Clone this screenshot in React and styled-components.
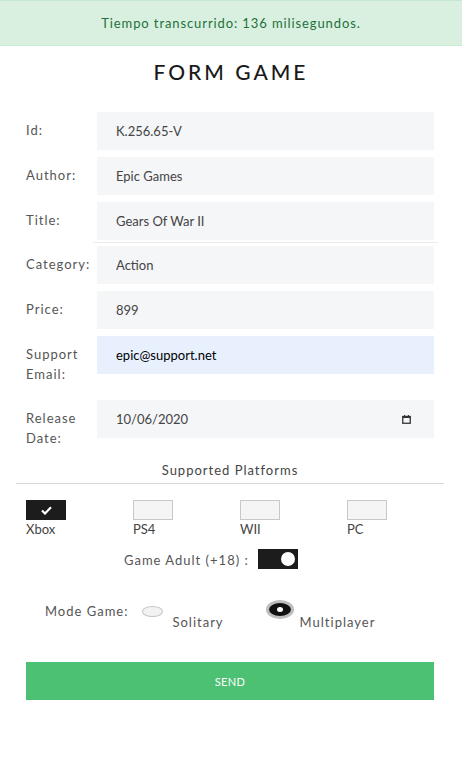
import React from "react";
import styled, { createGlobalStyle } from "styled-components";

const Global = createGlobalStyle`
  html, body { margin: 0; padding: 0; background: #fff; }
  body { font-family: Lato, "Noto Sans", sans-serif; color: #333; }
  * { box-sizing: border-box; }
`;

const Page = styled.div`
  width: 462px;
  min-height: 768px;
  background: #fff;
`;

const Alert = styled.div`
  height: 46px;
  background: #d9f0e0;
  border-top: 1px solid #c6e8d0;
  border-bottom: 1px solid #c6e8d0;
  color: #22703a;
  font-size: 13px;
  letter-spacing: 0.9px;
  display: flex;
  align-items: center;
  justify-content: center;
`;

const Title = styled.h1`
  margin: 14px 0 0;
  height: 24px;
  font-size: 21px;
  font-weight: 500;
  letter-spacing: 3px;
  text-align: center;
  line-height: 24px;
  color: #1a1a1a;
`;

const Fields = styled.div`
  display: flex;
  flex-direction: column;
  gap: 7px;
  padding: 0 28px 0 26px;
  margin-top: 28px;
`;

const Row = styled.div`
  display: flex;
  align-items: flex-start;
`;

const Label = styled.label`
  width: 71px;
  flex: none;
  padding: 8px 0 9px;
  line-height: 20px;
  font-size: 13px;
  letter-spacing: 1px;
  color: #555;
`;

const Input = styled.input`
  flex: 1;
  height: 38px;
  border: none;
  outline: none;
  padding: 0 0 0 19px;
  margin: 0;
  background: ${(p) => (p.$filled ? "#e8f0fe" : "#f5f6f8")};
  color: ${(p) => (p.$filled ? "#000" : "#444")};
  font-family: Lato, "Noto Sans", sans-serif;
  font-size: 13px;
  min-width: 0;
`;

const DateBox = styled.div`
  flex: 1;
  height: 38px;
  background: #f5f6f8;
  display: flex;
  align-items: center;
  justify-content: space-between;
  padding: 0 23px 0 19px;
  font-size: 13px;
  color: #444;
`;

const Divider = styled.div`
  height: 1px;
  background: #ececec;
  margin: -5px -4px -4px 67px;
`;

const SectionTitle = styled.div`
  margin: 5px 18px 0 16px;
  padding-bottom: 5px;
  border-bottom: 1px solid #d8d8d8;
  text-align: center;
  font-size: 13px;
  letter-spacing: 1px;
  color: #444;
`;

const Platforms = styled.div`
  display: grid;
  grid-template-columns: repeat(4, 107px);
  padding: 16px 0 0 26px;
`;

const Platform = styled.div`
  display: flex;
  flex-direction: column;
  align-items: flex-start;
`;

const Check = styled.span`
  width: 40px;
  height: 20px;
  display: flex;
  align-items: center;
  justify-content: center;
  background: ${(p) => (p.$on ? "#1c1c1c" : "#f5f5f5")};
  border: 1px solid ${(p) => (p.$on ? "#1c1c1c" : "#c8c8c8")};
`;

const PlatformName = styled.span`
  font-size: 13px;
  line-height: 18px;
  color: #444;
`;

const AdultRow = styled.div`
  display: flex;
  align-items: flex-end;
  padding: 11px 0 0 124px;
  gap: 9px;
`;

const Text = styled.span`
  font-size: 13px;
  letter-spacing: 1px;
  color: #555;
  line-height: 18px;
`;

const Toggle = styled.span`
  width: 40px;
  height: 20px;
  background: #1c1c1c;
  display: flex;
  align-items: center;
  justify-content: flex-end;
  padding-right: 3px;
`;

const Knob = styled.span`
  width: 14px;
  height: 14px;
  border-radius: 50%;
  background: #fff;
`;

const ModeRow = styled.div`
  display: flex;
  align-items: flex-start;
  padding: 34px 0 0 45px;
`;

const ModeLabel = styled(Text)`
  margin-top: -1px;
  margin-right: 14px;
`;

const RadioGroup = styled.div`
  display: flex;
  align-items: flex-start;
  margin-right: ${(p) => p.$gap || 0}px;
`;

const Radio = styled.span`
  display: flex;
  align-items: center;
  justify-content: center;
  flex: none;
  border-radius: 50%;
  ${(p) =>
    p.$on
      ? `width: 28px; height: 19px; margin-top: -3px; background: #111; border: 3px solid #bdbdbd;`
      : `width: 21px; height: 11px; margin-top: 3px; background: #f2f2f2; border: 1px solid #c4c4c4;`}
`;

const Dot = styled.span`
  width: 6px;
  height: 5px;
  border-radius: 50%;
  background: #fff;
`;

const RadioText = styled(Text)`
  margin: 10px 0 0 ${(p) => p.$indent}px;
`;

const Send = styled.button`
  display: block;
  margin: 31px 28px 0 26px;
  width: 408px;
  height: 38px;
  border: none;
  background: #4cc174;
  color: #fff;
  font-family: Lato, "Noto Sans", sans-serif;
  font-size: 11px;
  letter-spacing: 0.3px;
`;

const CalendarIcon = () => (
  <svg width="9" height="9" viewBox="0 0 9 9">
    <rect x="0.75" y="1.5" width="7.5" height="6.75" fill="none" stroke="#333" strokeWidth="1.3" />
    <rect x="0.5" y="1" width="8" height="2" fill="#333" />
    <rect x="2" y="0" width="1.2" height="1.5" fill="#333" />
    <rect x="5.8" y="0" width="1.2" height="1.5" fill="#333" />
  </svg>
);

const CheckMark = () => (
  <svg width="11" height="9" viewBox="0 0 11 9">
    <path d="M1 4.5 L4 7.5 L10 1.2" fill="none" stroke="#fff" strokeWidth="2.2" />
  </svg>
);

const fields = [
  ["Id:", "K.256.65-V"],
  ["Author:", "Epic Games"],
  ["Title:", "Gears Of War II"],
];
const fields2 = [
  ["Category:", "Action"],
  ["Price:", "899"],
];

export default function App() {
  return (
    <Page>
      <Global />
      <Alert>Tiempo transcurrido: 136 milisegundos.</Alert>
      <Title>FORM GAME</Title>
      <Fields>
        {fields.map(([l, v]) => (
          <Row key={l}>
            <Label>{l}</Label>
            <Input readOnly value={v} />
          </Row>
        ))}
        <Divider />
        {fields2.map(([l, v]) => (
          <Row key={l}>
            <Label>{l}</Label>
            <Input readOnly value={v} />
          </Row>
        ))}
        <Row>
          <Label>Support Email:</Label>
          <Input readOnly $filled value="epic@support.net" />
        </Row>
        <Row>
          <Label>Release Date:</Label>
          <DateBox>
            <span>10/06/2020</span>
            <CalendarIcon />
          </DateBox>
        </Row>
      </Fields>
      <SectionTitle>Supported Platforms</SectionTitle>
      <Platforms>
        {[
          ["Xbox", true],
          ["PS4", false],
          ["WII", false],
          ["PC", false],
        ].map(([n, on]) => (
          <Platform key={n}>
            <Check $on={on}>{on && <CheckMark />}</Check>
            <PlatformName>{n}</PlatformName>
          </Platform>
        ))}
      </Platforms>
      <AdultRow>
        <Text>Game Adult (+18) :</Text>
        <Toggle>
          <Knob />
        </Toggle>
      </AdultRow>
      <ModeRow>
        <ModeLabel>Mode Game:</ModeLabel>
        <RadioGroup $gap={42}>
          <Radio />
          <RadioText $indent={9}>Solitary</RadioText>
        </RadioGroup>
        <RadioGroup>
          <Radio $on>
            <Dot />
          </Radio>
          <RadioText $indent={6}>Multiplayer</RadioText>
        </RadioGroup>
      </ModeRow>
      <Send>SEND</Send>
    </Page>
  );
}
